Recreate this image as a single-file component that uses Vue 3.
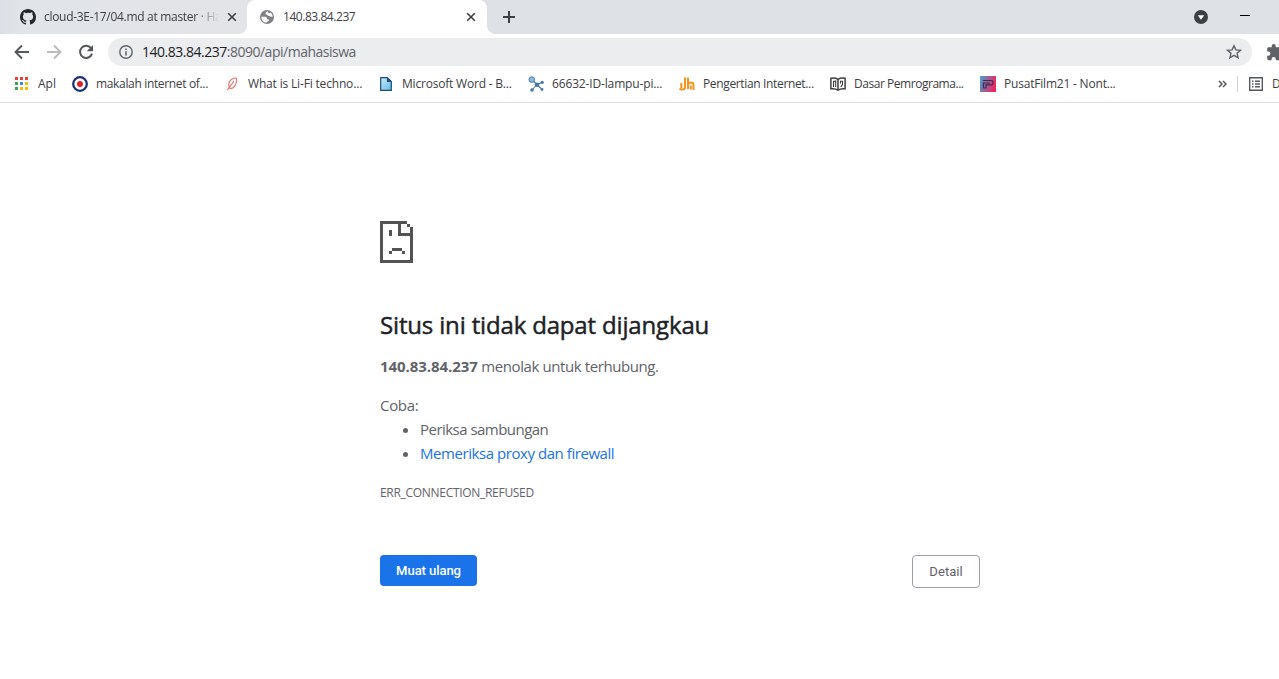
<script setup>
const bookmarks = [
  { icon: 'apps', label: 'Apl' },
  { icon: 'target', label: 'makalah internet of...' },
  { icon: 'leaf', label: 'What is Li-Fi techno...' },
  { icon: 'doc', label: 'Microsoft Word - B...' },
  { icon: 'nodes', label: '66632-ID-lampu-pi...' },
  { icon: 'jh', label: 'Pengertian Internet...' },
  { icon: 'book', label: 'Dasar Pemrograma...' },
  { icon: 'film', label: 'PusatFilm21 - Nont...' }
]
const appColors = ['#ea4335', '#ea4335', '#ea4335', '#34a853', '#4285f4', '#fbbc04', '#34a853', '#fbbc04', '#fbbc04']
</script>

<template>
  <div class="browser">
    <header class="tabs">
      <div class="tab inactive">
        <svg class="i16" viewBox="0 0 16 16"><path fill="#24292e" fill-rule="evenodd" d="M8 0C3.58 0 0 3.58 0 8c0 3.54 2.29 6.53 5.47 7.59.4.07.55-.17.55-.38 0-.19-.01-.82-.01-1.49-2.01.37-2.53-.49-2.69-.94-.09-.23-.48-.94-.82-1.13-.28-.15-.68-.52-.01-.53.63-.01 1.08.58 1.23.82.72 1.21 1.87.87 2.33.66.07-.52.28-.87.51-1.07-1.78-.2-3.64-.89-3.64-3.95 0-.87.31-1.59.82-2.15-.08-.2-.36-1.02.08-2.12 0 0 .67-.21 2.2.82A7.6 7.6 0 018 3.87c.68 0 1.36.09 2 .26 1.53-1.04 2.2-.82 2.2-.82.44 1.1.16 1.92.08 2.12.51.56.82 1.27.82 2.15 0 3.07-1.87 3.75-3.65 3.95.29.25.54.73.54 1.48 0 1.07-.01 1.93-.01 2.2 0 .21.15.46.55.38A8.01 8.01 0 0016 8c0-4.42-3.58-8-8-8z" /></svg>
        <span class="tab-title faded">cloud-3E-17/04.md at master · Ha</span>
        <svg class="close" viewBox="0 0 10 10"><path d="M1.2 1.2l7.6 7.6M8.8 1.2L1.2 8.8" /></svg>
      </div>
      <div class="tab active">
        <svg class="i16 globe" viewBox="0 0 16 16"><circle cx="8" cy="8" r="7" fill="#7f8184" /><path d="M7.600 2.200c2 0 2.900.5 3.200 1-.9.500-1 1.300-2.200 1.300-1.300.1-1.100 1.300-.5 1.800.9.900 3.600.3 4 1.700.2.800.900.700 1.700.600-.2 1.900-1.500 3.900-3.600 4.700.100-1.300-.1-2.500-1.200-2.800-1-.2-1.200-1.700-2.800-1.700-1.700 0-2.800-.2-4-1.400.4 2.600 2.200 4.200 4.600 5.600" fill="none" stroke="#fff" stroke-width="0" /><path d="M2.300 7.700h3.300c1.500 0 2.300.7 2.300 1.700 0 .9.900.9 1.700 1 .7.1.5 1.100-.2 1.700-.8.600-1.800.7-2 1.600-2.800-.2-5-2.700-5.100-6zM8.200 2.300c-.3.900-1.700 1.200-1.700 2.500 0 1.100 1.600.7 2 1.500.4.900 1.700.6 2.300 1 .8.600 1.800.5 2.800.4 0-1.700-.8-3.200-2-4.200-.4.600-1.300.8-1.900.5-.6-.3-.3-1.200-1.500-1.700z" fill="#fff" /></svg>
        <span class="tab-title ip">140.83.84.237</span>
        <svg class="close" viewBox="0 0 10 10"><path d="M1.200 1.200l7.600 7.600M8.800 1.200L1.200 8.800" /></svg>
      </div>
      <svg class="plus" viewBox="0 0 12 12"><path d="M6 0v12M0 6h12" /></svg>
      <svg class="drop" viewBox="0 0 14 14"><circle cx="7" cy="7" r="7" fill="#3c4043" /><path d="M3.800 5.200h6.400L7 9.800z" fill="#fff" /></svg>
      <span class="minimize"></span>
    </header>

    <nav class="toolbar">
      <svg class="arrow" viewBox="0 0 16 16"><path d="M15 8H2M8 1.500L1.500 8 8 14.500" /></svg>
      <svg class="arrow off" viewBox="0 0 16 16"><path d="M1 8h13M8 1.500L14.500 8 8 14.500" /></svg>
      <svg class="reload" viewBox="0 0 16 16"><path d="M13.300 4.600A6.100 6.100 0 1 0 14 9.600" fill="none" stroke="#54575b" stroke-width="2" /><path d="M15 1v6.300H8.700z" fill="#54575b" /></svg>
      <div class="omnibox">
        <svg class="info" viewBox="0 0 14 14"><circle cx="7" cy="7" r="6.200" fill="none" stroke="#5f6368" stroke-width="1.400" /><path d="M7 6.200v4.300M7 3.500v1.500" stroke="#5f6368" stroke-width="1.500" /></svg>
        <span class="url"><b>140.83.84.237</b>:8090/api/mahasiswa</span>
        <svg class="star" viewBox="0 0 16 16"><path d="M8 1.700l1.900 4.200 4.600.4-3.500 3 1.100 4.500L8 11.400l-4.100 2.400L5 9.300l-3.500-3 4.600-.4z" fill="none" stroke="#5f6368" stroke-width="1.400" /></svg>
      </div>
      <svg class="puzzle" viewBox="0 0 17 17"><path d="M14.500 7.800h-1.200V4.600c0-.8-.6-1.400-1.400-1.400H8.700V2.100a2 2 0 0 0-4 0v1.100H1.600c-.8 0-1.400.6-1.400 1.400v3h1.100a2.100 2.100 0 0 1 0 4.200H.2v3c0 .8.600 1.400 1.400 1.400h3v-1.100a2.100 2.100 0 0 1 4.200 0v1.100h3.100c.8 0 1.400-.6 1.400-1.400v-3.200h1.200a1.900 1.900 0 0 0 0-3.800z" fill="#5f6368" /></svg>
    </nav>

    <div class="bookmarks">
      <div v-for="b in bookmarks" :key="b.label" class="bookmark" :class="b.icon">
        <svg class="i16" viewBox="0 0 16 16">
          <template v-if="b.icon === 'apps'">
            <rect v-for="(c, n) in appColors" :key="n" :x="1 + (n % 3) * 5" :y="1 + Math.floor(n / 3) * 5" width="3" height="3" :fill="c" />
          </template>
          <template v-else-if="b.icon === 'target'">
            <circle cx="8" cy="8" r="6.800" fill="#fff" stroke="#1d3278" stroke-width="2.300" /><circle cx="8" cy="8" r="2.900" fill="#e01b22" />
          </template>
          <template v-else-if="b.icon === 'leaf'">
            <path d="M3.200 14.200l2-2.700C3.500 8.500 5.500 4.500 8 3c1.500-.9 3.500-1 4.400-.8.500 3.300-.8 7.300-3 9.300-1.300 1.100-2.900 1.300-4.200 0M5.200 11.500C7 9.500 8.500 7.500 10 4.800" fill="none" stroke="#e87070" stroke-width="1.100" />
          </template>
          <template v-else-if="b.icon === 'doc'">
            <defs><linearGradient id="paper" x2="1" y2="1"><stop stop-color="#c9ecfc" /><stop offset="1" stop-color="#67b8e6" /></linearGradient></defs>
            <path d="M2.700 1.600h6.600l4 4v8.800H2.700z" fill="url(#paper)" stroke="#174f78" stroke-width="1.200" /><path d="M9 1.300V6h4.500z" fill="#174f78" />
          </template>
          <template v-else-if="b.icon === 'nodes'">
            <path d="M3.500 3.500L9 8.500M14 6.500L9 8.500l5 5M9 8.500l-5 5.500" stroke="#4778a9" stroke-width="1.100" fill="none" /><circle cx="3.800" cy="3.600" r="2.800" fill="#8fb8dc" stroke="#4778a9" /><circle cx="9" cy="8.700" r="2.300" fill="#4778a9" /><circle cx="14.200" cy="6.300" r="1.600" fill="#4778a9" /><circle cx="4" cy="14" r="1.800" fill="#4778a9" /><circle cx="14" cy="13.500" r="1.400" fill="#4778a9" />
          </template>
          <template v-else-if="b.icon === 'jh'">
            <path d="M6 1.500v9.500c0 3-3.300 3.200-5.500 1.500M2.300 7v5M9 1.500V13M9 9c.5-3.300 5.500-3.300 5.500 0v5M11.800 9.500v4" fill="none" stroke="#f7941e" stroke-width="2" />
          </template>
          <template v-else-if="b.icon === 'book'">
            <path d="M.9 2.300c2.500-.6 5-.4 7.100 1 2.100-1.400 4.600-1.600 7.100-1v10.500c-2.500-.3-5-.1-7.100 1.400-2.100-1.500-4.600-1.700-7.100-1.400zM8 3.300v10.500" fill="none" stroke="#3f3f3f" stroke-width="1.500" /><path d="M3.500 11V5.500l2.200-.5v6M10.500 7.500V5.300h2v3L10.800 11" fill="none" stroke="#3f3f3f" stroke-width="1.100" />
          </template>
          <template v-else>
            <defs><linearGradient id="poster" y2=".3"><stop stop-color="#45a5cf" /><stop offset=".5" stop-color="#96639d" /><stop offset="1" stop-color="#ed2864" /></linearGradient></defs>
            <path d="M0 0h16v16H0z" fill="url(#poster)" /><path d="M3 4.500h8.500c2 0 2 4.300 0 4.300H6V12H3.500V7H10" fill="none" stroke="#3b2b4e" stroke-width="1.200" />
          </template>
        </svg>
        <span class="label">{{ b.label }}</span>
      </div>
      <svg class="more" viewBox="0 0 9 8"><path d="M1 1l3 3-3 3M5 1l3 3-3 3" /></svg>
      <span class="divider"></span>
      <svg class="list" viewBox="0 0 14 14"><path d="M.7.700h12.600v12.600H.7z" fill="none" stroke="#54575b" stroke-width="1.400" /><path d="M3 4.200h1.500M6 4.200h5M3 7h1.500M6 7h5M3 9.800h1.500M6 9.800h5" stroke="#54575b" stroke-width="1.400" /></svg>
      <span class="label">D</span>
    </div>

    <main class="error">
      <svg class="sad" viewBox="0 0 33 42" shape-rendering="crispEdges"><path fill="#535353" d="M0 0h27v3H3v36h27V15H18V3h3v9h9V6h3v36H0zM27 3h3v3h-3zM9 9h3v6H9zM12 27h10v3H12zM9 30h3v3H9zM22 30h3v3h-3z" /></svg>
      <h1>Situs ini tidak dapat dijangkau</h1>
      <p class="summary"><strong>140.83.84.237</strong> <span>menolak untuk terhubung.</span></p>
      <p class="try">Coba:</p>
      <ul>
        <li><span class="check">Periksa sambungan</span></li>
        <li><a>Memeriksa proxy dan firewall</a></li>
      </ul>
      <p class="code">ERR_CONNECTION_REFUSED</p>
      <div class="buttons">
        <button class="primary">Muat ulang</button>
        <button class="secondary">Detail</button>
      </div>
    </main>
  </div>
</template>

<style>
body { margin: 0; overflow: hidden; background: #fff; }
</style>

<style scoped>
.browser { width: 1279px; height: 679px; overflow: hidden; background: #fff; font-family: "Open Sans", "Noto Sans", sans-serif; color: #3c4043; }
svg { display: block; flex: none; }
.i16 { width: 16px; height: 16px; }
.tabs { height: 34px; display: flex; align-items: center; background: #dee1e6; }
.tab { height: 34px; box-sizing: border-box; display: flex; align-items: center; font-size: 12px; }
.inactive { width: 247px; padding-left: 20px; background: linear-gradient(90deg, #dbdee4 0, #e1e4e8 20px, #e2e4e8); border-radius: 0 0 8px 0; }
.active { width: 240px; padding-left: 12px; background: #fff; border-radius: 8px 8px 0 0; position: relative; }
.active::before, .active::after { content: ""; position: absolute; bottom: 0; width: 8px; height: 8px; }
.active::before { left: -8px; background: radial-gradient(circle at 0 0, transparent 7.5px, #fff 8px); }
.active::after { right: -8px; background: radial-gradient(circle at 100% 0, transparent 7.5px, #fff 8px); }
.tab-title { width: 175px; margin: 0 8px; padding-bottom: 1px; white-space: nowrap; letter-spacing: -.3px; }
.ip { letter-spacing: -.45px; }
.faded { mask-image: linear-gradient(90deg, #000 150px, transparent 176px); }
.close { width: 10px; height: 10px; fill: none; stroke: #3c4043; stroke-width: 1.600; }
.plus { width: 12px; height: 12px; margin-left: 16px; stroke: #3c4043; stroke-width: 2; }
.drop { width: 14px; height: 14px; margin-left: auto; }
.minimize { width: 10px; height: 1px; background: #000; margin: 0 29px 4px 32px; }
.toolbar { height: 36px; display: flex; align-items: center; padding-left: 14px; }
.arrow { width: 16px; height: 16px; fill: none; stroke: #54575b; stroke-width: 1.900; margin-right: 16px; }
.off { stroke: #babcbe; }
.reload { width: 16px; height: 16px; }
.omnibox { flex: none; width: 1144px; height: 28px; box-sizing: border-box; margin-left: 14px; padding: 0 10px 0 11px; border-radius: 14px; background: #ecedef; display: flex; align-items: center; }
.info { width: 14px; height: 14px; }
.url { margin-left: 9px; font-size: 14px; line-height: 20px; color: #5f6368; white-space: nowrap; letter-spacing: -.49px; }
.url b { font-weight: 400; color: #202124; }
.star { width: 16px; height: 16px; margin-left: auto; }
.puzzle { width: 17px; height: 17px; margin-left: 15px; }
.bookmarks { height: 33px; padding: 0 0 4px 14px; box-sizing: border-box; border-bottom: 1px solid #dadce0; display: grid; grid-template-columns: 58px 152px 154px 150px 151px 151px 150px 238px 19px 12px 23px 40px; align-items: center; }
.bookmark { display: flex; align-items: center; gap: 8px; }
.label { font-size: 12px; line-height: 16px; white-space: nowrap; letter-spacing: -.3px; }
.apps .label { letter-spacing: 0; }
.target .label { letter-spacing: -.34px; }
.leaf .label { letter-spacing: -.17px; }
.doc .label, .film .label { letter-spacing: -.2px; }
.nodes .label { letter-spacing: -.15px; }
.jh .label { letter-spacing: -.35px; }
.book .label { letter-spacing: -.46px; }
.more { width: 9px; height: 8px; fill: none; stroke: #54575b; stroke-width: 1.500; }
.divider { width: 1px; height: 16px; background: #cdd0d4; }
.list { width: 14px; height: 14px; }
.error { width: 600px; margin: 118px 0 0 380px; color: #5f6368; font-size: 15px; line-height: 24px; }
.sad { width: 33px; height: 42px; }
h1 { margin: 47px 0 0; font-size: 24px; font-weight: 500; line-height: 29px; color: #202124; white-space: nowrap; letter-spacing: -.16px; -webkit-text-stroke: .45px #202124; }
p { margin: 0; white-space: nowrap; letter-spacing: -.3px; }
.summary { margin-top: 15px; }
.summary strong { letter-spacing: -.07px; }
.summary span { letter-spacing: -.41px; }
.try { margin-top: 15px; }
ul { margin: 0; padding-left: 40px; }
.check { letter-spacing: -.53px; }
a { color: #1a73e8; letter-spacing: -.44px; }
.code { margin-top: 16px; font-size: 12px; }
.buttons { margin-top: 50px; display: flex; justify-content: space-between; align-items: flex-start; }
button { font-family: Roboto, sans-serif; font-size: 13.100px; border-radius: 4px; padding: 0; box-sizing: border-box; }
.primary { width: 97px; height: 31px; border: 0; background: #1a73e8; color: #fff; font-weight: 500; letter-spacing: -.1px; }
.secondary { width: 68px; height: 33px; border: 1px solid #9aa0a6; background: #fff; color: #5f6368; }
</style>
